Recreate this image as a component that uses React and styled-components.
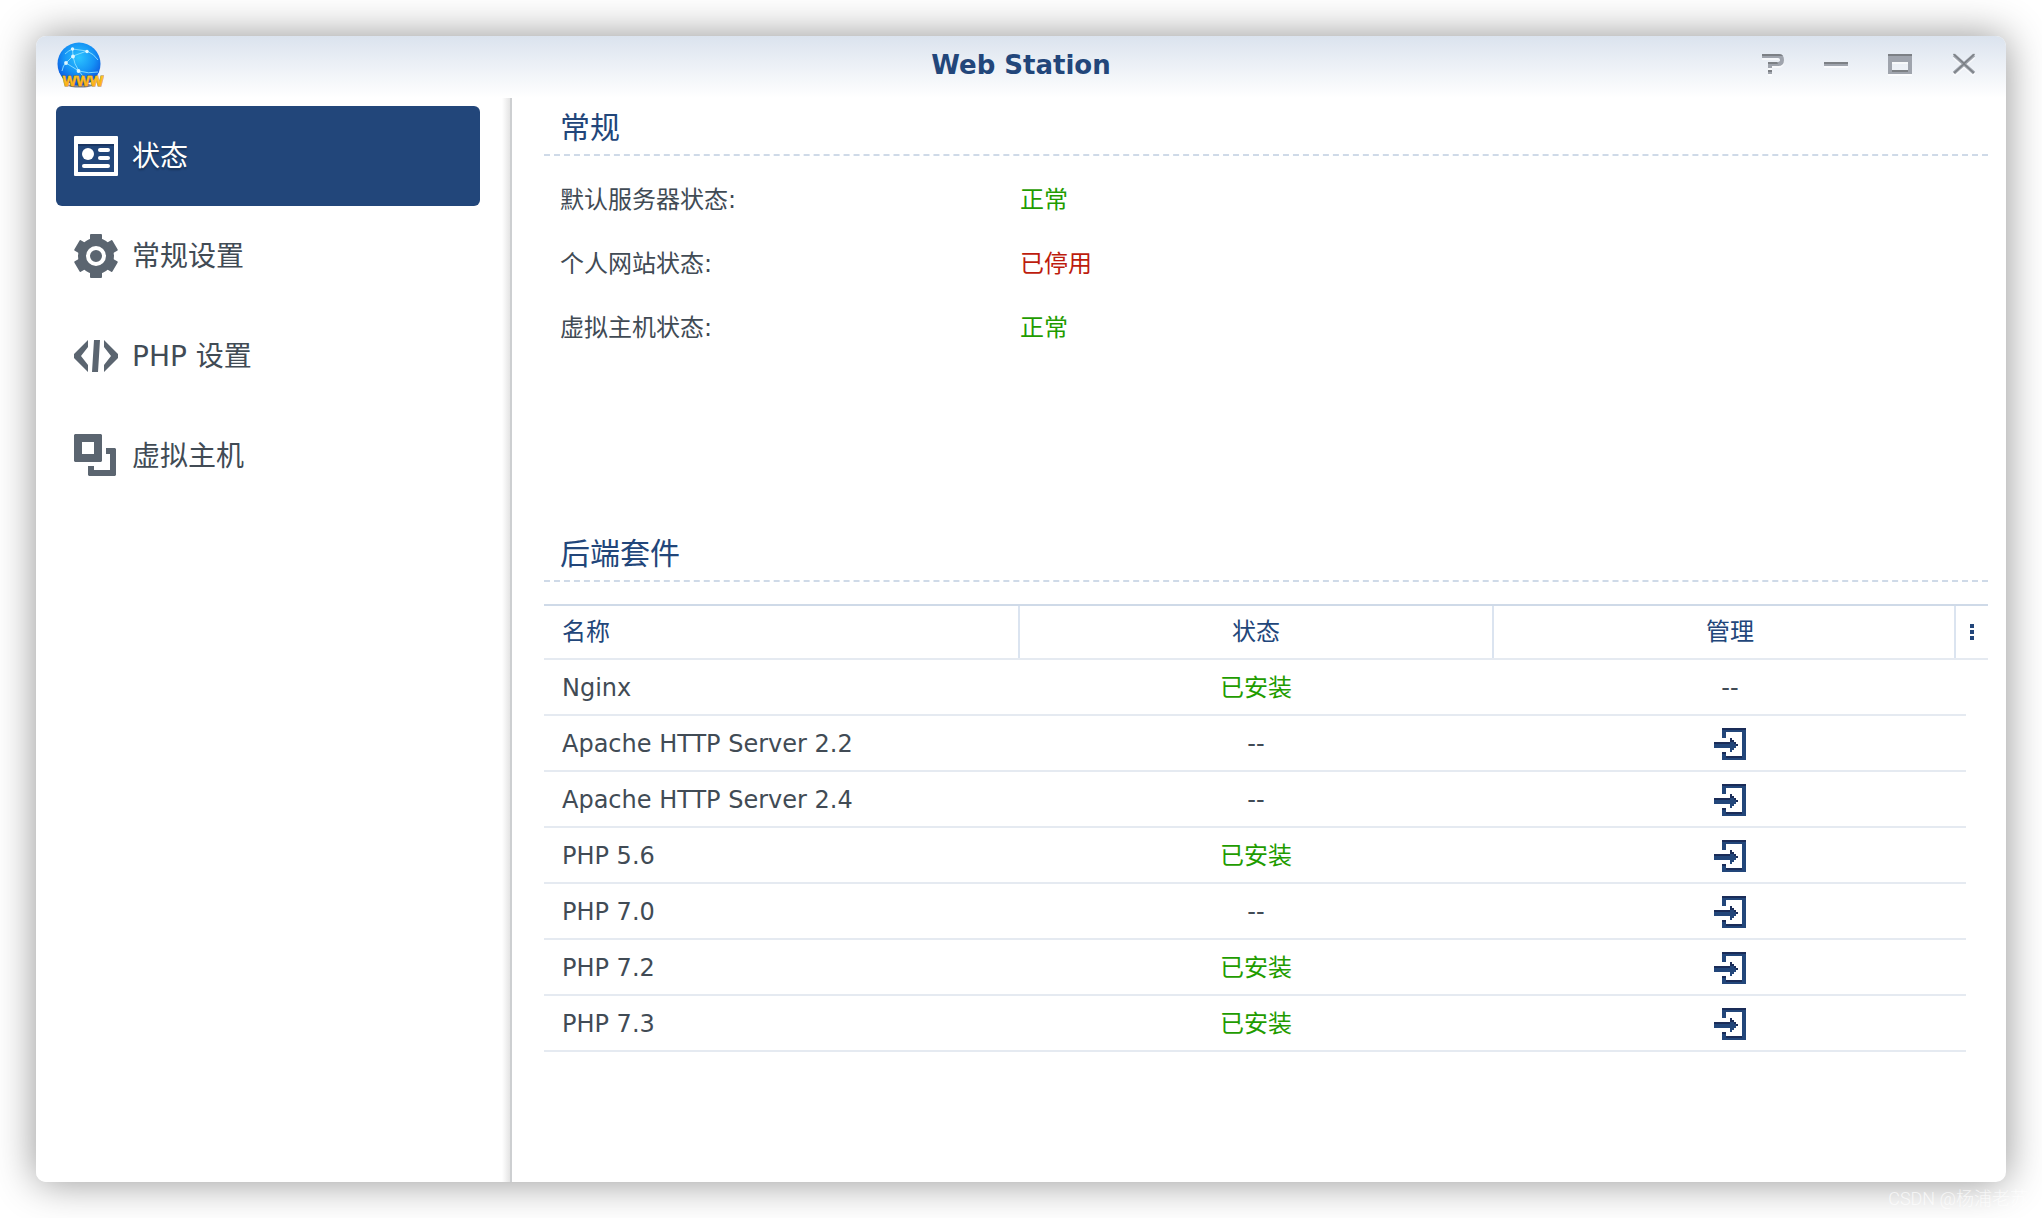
import React, { useState } from "react";
import styled, { createGlobalStyle, css } from "styled-components";

const color = {
  navy: "#22467a",
  navyDark: "#1a2c58",
  text: "#414b55",
  icon: "#5b6570",
  green: "#1f9c00",
  red: "#bd1c0d",
  line: "#cfdae8",
  rowLine: "#e5eaf1",
  columnLine: "#dbe4f0",
};

const GlobalStyle = createGlobalStyle`
  *, *::before, *::after { box-sizing: border-box; }
  body {
    margin: 0;
    background: #fff;
    color: ${color.text};
    font: 24px/32px "DejaVu Sans", "Noto Sans CJK SC", sans-serif;
  }
  button {
    margin: 0;
    padding: 0;
    border: 0;
    background: none;
    color: inherit;
    font: inherit;
    cursor: pointer;
  }
  svg { display: block; }
`;

const Desktop = styled.div`
  position: relative;
  display: flex;
  min-height: 100vh;
  padding: 36px;
`;

const Window = styled.div`
  flex: 1;
  display: flex;
  flex-direction: column;
  min-width: 0;
  border-radius: 10px;
  background: #fff;
  box-shadow: 0 0 40px rgba(0, 0, 0, 0.43);
`;

const TitleBar = styled.header`
  display: grid;
  grid-template-columns: 1fr auto 1fr;
  align-items: center;
  height: 62px;
  padding: 0 20px 4px;
  border-radius: 10px 10px 0 0;
  background: linear-gradient(#dbe3ee, #fff);
`;

const Title = styled.h1`
  margin: 0;
  color: ${color.navy};
  font-size: 26px;
  line-height: 32px;
  font-weight: bold;
`;

const WindowControls = styled.div`
  display: flex;
  justify-content: flex-end;
  gap: 40px;
  padding: 0 10px 2px 0;
`;

const ControlButton = styled.button`
  width: 24px;
  height: 24px;
  filter: drop-shadow(0 2px 0 rgba(255, 255, 255, 0.6));
`;

const Body = styled.div`
  flex: 1;
  display: flex;
`;

const Sidebar = styled.nav`
  flex: none;
  width: 476px;
  padding: 8px 32px 8px 20px;
  border-right: 2px solid #cdcfd1;
  background: linear-gradient(to left, #e4e4e4, #fff 8px);
  border-bottom-left-radius: 10px;
`;

const NavItem = styled.button`
  display: flex;
  align-items: center;
  gap: 14px;
  width: 424px;
  height: 100px;
  padding: 0 18px;
  border-radius: 6px;
  font-size: 28px;
  line-height: 40px;
  text-align: left;
  ${(p) =>
    p.$active &&
    css`
      background: ${color.navy};
      color: #fff;
      text-shadow: 0 2px 2px rgba(0, 0, 0, 0.3);
    `}
`;

const NavIcon = styled.span`
  display: flex;
  width: 44px;
  color: ${(p) => (p.$active ? "#fff" : color.icon)};
`;

const NavLabel = styled.span`
  padding-top: 2px;
`;

const Main = styled.main`
  flex: 1;
  min-width: 0;
  padding: 0 18px 32px 32px;
`;

const Overview = styled.section`
  min-height: 426px;
`;

const SectionTitle = styled.h2`
  margin: 0;
  padding: 4px 16px 0;
  border-bottom: 2px dashed ${color.line};
  color: ${color.navy};
  font-size: 30px;
  line-height: 52px;
  font-weight: normal;
`;

const StatusList = styled.dl`
  margin: 0;
  padding: 12px 16px 0;
`;

const StatusRow = styled.div`
  display: grid;
  grid-template-columns: 460px 1fr;
  line-height: 64px;
`;

const StatusName = styled.dt``;

const StatusValue = styled.dd`
  margin: 0;
  color: ${(p) => (p.$ok ? color.green : color.red)};
`;

const PackageTable = styled.table`
  display: block;
  margin-top: 22px;
`;

const TableHead = styled.thead`
  display: block;
  border-top: 2px solid ${color.line};
  border-bottom: 2px solid ${color.rowLine};
  color: ${color.navy};
`;

const TableBody = styled.tbody`
  display: block;
  margin-right: 22px;
`;

const HeadRow = styled.tr`
  display: grid;
  grid-template-columns: repeat(3, 1fr) 22px;
  height: 52px;
`;

const HeadCell = styled.th`
  padding: 0 ${(p) => (p.$center ? 0 : 18)}px;
  border-left: ${(p) => (p.$center ? 2 : 0)}px solid ${color.columnLine};
  font-weight: normal;
  line-height: 52px;
  text-align: ${(p) => (p.$center ? "center" : "left")};
`;

const MenuCell = styled.th`
  display: flex;
  margin-left: -12px;
  padding: 0;
  border-left: 2px solid ${color.columnLine};
`;

const MenuButton = styled.button`
  flex: 1;
  display: flex;
  align-items: center;
  justify-content: center;
`;

const Row = styled.tr`
  display: grid;
  grid-template-columns: repeat(3, 1fr);
  height: 56px;
  border-bottom: 2px solid ${color.rowLine};
`;

const Cell = styled.td`
  display: flex;
  align-items: center;
  justify-content: ${(p) => (p.$center ? "center" : "flex-start")};
  padding: 2px 0 0 ${(p) => (p.$center ? 2 : 18)}px;
  color: ${(p) => (p.$ok ? color.green : "inherit")};
`;

const Watermark = styled.small`
  position: absolute;
  right: 14px;
  bottom: 7px;
  color: rgba(255, 255, 255, 0.7);
  font: 300 18px/24px Roboto, "Noto Sans CJK SC", sans-serif;
`;

const GlobeLogo = () => (
  <svg width="48" height="48" viewBox="0 0 48 48" role="img" aria-label="Web Station">
    <defs>
      <radialGradient id="globe" cx="0.5" cy="0.35" r="0.65">
        <stop offset="0" stopColor="#2cc4ff" />
        <stop offset="0.55" stopColor="#1593f5" />
        <stop offset="1" stopColor="#0a50dc" />
      </radialGradient>
      <linearGradient id="gold" x1="0" y1="0" x2="0" y2="1">
        <stop offset="0" stopColor="#ffd21f" />
        <stop offset="1" stopColor="#ffa412" />
      </linearGradient>
    </defs>
    <ellipse cx="24" cy="44.500" rx="12" ry="2" fill="#27364d" opacity="0.6" />
    <circle cx="23" cy="23" r="21.500" fill="url(#globe)" />
    <g fill="none" stroke="#8fe0ff" strokeWidth="0.9">
      <path d="M6 30Q7 24 10 22L17 15L16.500 8L31 10L17 15Q18 23 23 30L10 22" />
      <path d="M31 10Q38 13 42 19M23 30Q32 33 42 31M23 30L29 38M16.500 8Q12 10 9 13" />
    </g>
    <g fill="#dff7ff">
      <circle cx="16.500" cy="8" r="1.700" />
      <circle cx="31" cy="10.500" r="1.700" />
      <circle cx="17" cy="15.500" r="1.900" />
      <circle cx="10" cy="22" r="1.900" />
      <circle cx="22.500" cy="30" r="1.900" />
    </g>
    <g
      textAnchor="middle"
      fontFamily="Noto Sans, sans-serif"
      fontWeight="bold"
      fontSize="14"
    >
      <text x="27" y="45" fill="#6b4514" stroke="#6b4514" strokeWidth="1.500" opacity="0.5">
        WWW
      </text>
      <text x="27" y="45" fill="url(#gold)" stroke="url(#gold)" strokeWidth="0.4">
        WWW
      </text>
    </g>
  </svg>
);

const StatusIcon = () => (
  <svg width="44" height="40" viewBox="0 0 44 40" fill="currentColor">
    <path d="M0 1Q0 0 1 0H43Q44 0 44 1V39Q44 40 43 40H1Q0 40 0 39ZM4 8V36H40V8Z" fillRule="evenodd" />
    <path d="M4 8H40V10H4Z" fill="#1a3663" />
    <circle cx="14" cy="18" r="6" />
    <rect x="24" y="12" width="12" height="4" rx="2" />
    <rect x="24" y="20" width="12" height="4" rx="2" />
    <rect x="8" y="28" width="28" height="4" rx="2" />
  </svg>
);

const GearIcon = () => (
  <svg width="44" height="44" viewBox="0 0 44 44" fill="currentColor">
    <circle cx="22" cy="22" r="18" />
    {[0, 60, 120].map((a) => (
      <rect key={a} x="16" y="0" width="12" height="44" rx="1" transform={`rotate(${a} 22 22)`} />
    ))}
    <circle cx="22" cy="22" r="8" fill="none" stroke="#fff" strokeWidth="4" />
  </svg>
);

const CodeIcon = () => (
  <svg width="44" height="32" viewBox="0 0 44 32" fill="currentColor">
    <path d="M14 0V7L7 16L14 25V32L0 18V14Z" />
    <path d="M20 0H26L24 32H18Z" />
    <path d="M30 0V7L37 16L30 25V32L44 18V14Z" />
  </svg>
);

const HostIcon = () => (
  <svg width="42" height="44" viewBox="0 0 42 44" fill="currentColor">
    <path d="M1 0H27L28 1V27L27 28H1L0 27V1ZM8 8V20H20V8Z" fillRule="evenodd" />
    <path d="M32 14H41L42 15V41L41 42H15L14 41V32H20V36H36V20H32Z" />
  </svg>
);

const EnterIcon = () => (
  <svg width="32" height="32" viewBox="0 0 32 32">
    <path fill={color.navy} d="M8 0H32V32H8V24H12V28H28V4H12V10H8Z" />
    <path
      fill={color.navy}
      d="M0 14H16V10H18V12H20V14H22V16H24V18H22V20H20V22H18V24H16V20H0Z"
    />
    <path
      fill={color.navyDark}
      d="M8 0H32V2H8ZM12 28H28V30H12ZM8 24H12V26H8ZM0 14H16V16H0ZM16 10H18V14H16ZM18 12H20V14H18ZM20 14H22V16H20ZM22 16H24V18H22Z"
    />
  </svg>
);

const controls = [
  {
    label: "帮助",
    art: (
      <>
        <path fill="#9fa4ad" d="M2 2H19Q24 2 24 8Q24 14 18 14H12V16H8V10H17Q20 10 20 8Q20 6 18 6H2ZM8 18H12V22H8Z" />
        <path fill="#7c8085" d="M2 2H19Q22 2 23 4H2ZM8 10H17L18 12H8ZM8 18H12V20H8Z" />
      </>
    ),
  },
  {
    label: "最小化",
    art: (
      <>
        <path fill="#9fa4ad" d="M0 10H24V14H0Z" />
        <path fill="#7c8085" d="M0 10H24V12H0Z" />
      </>
    ),
  },
  {
    label: "最大化",
    art: (
      <>
        <path fill="#9fa4ad" fillRule="evenodd" d="M0 2H24V22H0ZM4 10V18H20V10Z" />
        <path fill="#7c8085" d="M0 2H24V4H0ZM4 18H20V20H4Z" />
      </>
    ),
  },
  {
    label: "关闭",
    art: (
      <>
        <path stroke="#9fa4ad" strokeWidth="3.5" d="M2 3L22 21M22 3L2 21" />
        <path stroke="#7c8085" strokeWidth="1.5" d="M1.500 2L12 11.500L22.500 2M2 21L12 12L22 21" fill="none" />
      </>
    ),
  },
];

const navItems = [
  { label: "状态", Icon: StatusIcon },
  { label: "常规设置", Icon: GearIcon },
  { label: "PHP 设置", Icon: CodeIcon },
  { label: "虚拟主机", Icon: HostIcon },
];

const statuses = [
  { name: "默认服务器状态:", value: "正常", ok: true },
  { name: "个人网站状态:", value: "已停用", ok: false },
  { name: "虚拟主机状态:", value: "正常", ok: true },
];

const packages = [
  { name: "Nginx", installed: true, manageable: false },
  { name: "Apache HTTP Server 2.2", installed: false, manageable: true },
  { name: "Apache HTTP Server 2.4", installed: false, manageable: true },
  { name: "PHP 5.6", installed: true, manageable: true },
  { name: "PHP 7.0", installed: false, manageable: true },
  { name: "PHP 7.2", installed: true, manageable: true },
  { name: "PHP 7.3", installed: true, manageable: true },
];

export default function App() {
  const [active, setActive] = useState(0);

  return (
    <>
      <GlobalStyle />
      <Desktop>
        <Window>
          <TitleBar>
            <GlobeLogo />
            <Title>Web Station</Title>
            <WindowControls>
              {controls.map((c) => (
                <ControlButton key={c.label} type="button" aria-label={c.label}>
                  <svg width="24" height="24" viewBox="0 0 24 24">
                    {c.art}
                  </svg>
                </ControlButton>
              ))}
            </WindowControls>
          </TitleBar>
          <Body>
            <Sidebar>
              {navItems.map(({ label, Icon }, i) => (
                <NavItem
                  key={label}
                  type="button"
                  $active={i === active}
                  aria-current={i === active ? "page" : undefined}
                  onClick={() => setActive(i)}
                >
                  <NavIcon $active={i === active}>
                    <Icon />
                  </NavIcon>
                  <NavLabel>{label}</NavLabel>
                </NavItem>
              ))}
            </Sidebar>
            <Main>
              <Overview>
                <SectionTitle>常规</SectionTitle>
                <StatusList>
                  {statuses.map((s) => (
                    <StatusRow key={s.name}>
                      <StatusName>{s.name}</StatusName>
                      <StatusValue $ok={s.ok}>{s.value}</StatusValue>
                    </StatusRow>
                  ))}
                </StatusList>
              </Overview>
              <section>
                <SectionTitle>后端套件</SectionTitle>
                <PackageTable>
                  <TableHead>
                    <HeadRow>
                      <HeadCell scope="col">名称</HeadCell>
                      <HeadCell scope="col" $center>状态</HeadCell>
                      <HeadCell scope="col" $center>管理</HeadCell>
                      <MenuCell>
                        <MenuButton type="button" aria-label="列">
                          <svg width="4" height="16" viewBox="0 0 4 16" fill={color.navy}>
                            <path d="M0 0H4V4H0ZM0 6H4V10H0ZM0 12H4V16H0Z" />
                          </svg>
                        </MenuButton>
                      </MenuCell>
                    </HeadRow>
                  </TableHead>
                  <TableBody>
                    {packages.map((p) => (
                      <Row key={p.name}>
                        <Cell>{p.name}</Cell>
                        <Cell $center $ok={p.installed}>
                          {p.installed ? "已安装" : "--"}
                        </Cell>
                        <Cell $center>
                          {p.manageable ? (
                            <button type="button" aria-label={`管理 ${p.name}`}>
                              <EnterIcon />
                            </button>
                          ) : (
                            "--"
                          )}
                        </Cell>
                      </Row>
                    ))}
                  </TableBody>
                </PackageTable>
              </section>
            </Main>
          </Body>
        </Window>
        <Watermark>CSDN @杨浦老苏</Watermark>
      </Desktop>
    </>
  );
}
